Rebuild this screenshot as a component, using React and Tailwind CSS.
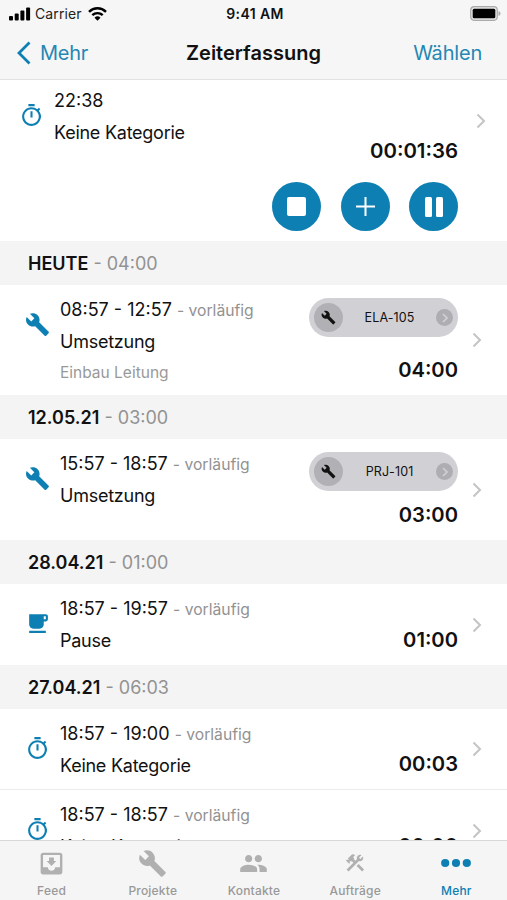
import React from "react";
import {
  MdBuild,
  MdOutlineTimer,
  MdFreeBreakfast,
  MdMoveToInbox,
  MdPeople,
  MdConstruction,
} from "react-icons/md";

const days = [
  {
    label: "HEUTE",
    total: "04:00",
    entries: [
      {
        time: "08:57 - 12:57",
        title: "Umsetzung",
        note: "Einbau Leitung",
        duration: "04:00",
        badge: "ELA-105",
        icon: "work",
        height: "h-[110px]",
      },
    ],
  },
  {
    label: "12.05.21",
    total: "03:00",
    entries: [
      {
        time: "15:57 - 18:57",
        title: "Umsetzung",
        duration: "03:00",
        badge: "PRJ-101",
        icon: "work",
        height: "h-[101px]",
      },
    ],
  },
  {
    label: "28.04.21",
    total: "01:00",
    entries: [
      {
        time: "18:57 - 19:57",
        title: "Pause",
        duration: "01:00",
        icon: "break",
        height: "h-[81px]",
      },
    ],
  },
  {
    label: "27.04.21",
    total: "06:03",
    entries: [
      {
        time: "18:57 - 19:00",
        title: "Keine Kategorie",
        duration: "00:03",
        icon: "timer",
        height: "h-[81px]",
      },
      {
        time: "18:57 - 18:57",
        title: "Keine Kategorie",
        duration: "00:00",
        icon: "timer",
        height: "h-[81px]",
      },
    ],
  },
];

const tabs = [
  { label: "Feed", icon: <MdMoveToInbox size={29} /> },
  { label: "Projekte", icon: <MdBuild size={29} /> },
  { label: "Kontakte", icon: <MdPeople size={29} /> },
  { label: "Aufträge", icon: <MdConstruction size={22} /> },
  { label: "Mehr", icon: <Dots />, active: true },
];

function Dots() {
  return (
    <svg width="30" height="10" viewBox="0 0 30 10" fill="currentColor">
      <circle cx="4.2" cy="5" r="4.1" />
      <circle cx="15" cy="5" r="4.1" />
      <circle cx="25.8" cy="5" r="4.1" />
    </svg>
  );
}

const Chevron = () => (
  <svg width="10" height="16" viewBox="0 0 10 16" fill="none" className="shrink-0">
    <path d="M1.5 1.5 8 8l-6.500 6.500" stroke="#c4c4c6" strokeWidth="2" />
  </svg>
);

const EntryIcon = ({ type }) => {
  if (type === "work") return <MdBuild size={25} />;
  if (type === "break") return <MdFreeBreakfast size={25} />;
  return <MdOutlineTimer size={25} />;
};

const StatusBar = () => (
  <div className="grid h-[27px] grid-cols-3 items-center pl-[9px] pr-[6px]">
    <div className="flex items-center">
      <svg width="22" height="14" viewBox="0 0 22 14" fill="#000">
        <rect x="0" y="9" width="4" height="4.500" rx="1" />
        <rect x="5.700" y="6.500" width="4" height="7" rx="1" />
        <rect x="11.400" y="3.500" width="4" height="10" rx="1" />
        <rect x="17.100" y="0.500" width="4" height="13" rx="1" />
      </svg>
      <span className="ml-1 text-[14px] tracking-[0.1px] text-[#222]">Carrier</span>
      <svg width="19" height="14" viewBox="0 0 19 14" className="ml-[6px]">
        <path d="M1 4.800a12.200 12.200 0 0 1 17 0" fill="none" stroke="#000" strokeWidth="2.500" />
        <path d="M4.300 8.200a7.500 7.500 0 0 1 10.400 0" fill="none" stroke="#000" strokeWidth="2.400" />
        <path d="M9.500 13.800 6.500 10.700a4.300 4.300 0 0 1 6 0Z" fill="#000" />
      </svg>
    </div>
    <span className="text-center text-[14px] font-semibold tracking-[0.4px]">
      9:41 AM
    </span>
    <svg width="31" height="15" viewBox="0 0 31 15" className="justify-self-end">
      <rect x="0.700" y="0.700" width="26.600" height="13.600" rx="3.500" fill="#e4e4e4" stroke="#aaa" strokeWidth="1.200" />
      <rect x="2.700" y="2.700" width="22.600" height="9.600" rx="1.500" fill="#000" />
      <path d="M28.500 5v5c1.400-.5 2-1.400 2-2.500s-.6-2-2-2.500Z" fill="#aaa" />
    </svg>
  </div>
);

const NavBar = () => (
  <header className="h-20 shrink-0 border-b border-[#e2e2e2] bg-[#f6f6f6]">
    <StatusBar />
    <div className="grid h-[51px] grid-cols-[1fr_auto_1fr] items-center px-4 text-[20px]">
      <button className="flex items-center text-[#2587b3]">
        <svg width="15" height="24" viewBox="0 0 15 24" fill="none">
          <path d="M13.500 1.500 3 12l10.500 10.500" stroke="#0d7fb2" strokeWidth="2.800" />
        </svg>
        <span className="ml-[9px] tracking-[-0.3px]">Mehr</span>
      </button>
      <h1 className="font-semibold">Zeiterfassung</h1>
      <button className="mr-[9px] justify-self-end tracking-[-0.2px] text-[#2587b3]">
        Wählen
      </button>
    </div>
  </header>
);

const RoundButton = ({ children }) => (
  <button className="flex size-[49px] items-center justify-center rounded-full bg-[#0d7fb2]">
    {children}
  </button>
);

const RunningTimer = () => (
  <section className="h-[161px] shrink-0">
    <div className="flex h-[88px] pl-[19px]">
      <div className="mt-[23px] text-[#0d7fb2]">
        <MdOutlineTimer size={25} />
      </div>
      <div className="ml-[10px] mt-[5px] text-[18px] leading-[31px]">
        <p className="h-[31.500px]">22:38</p>
        <p className="tracking-[-0.25px]">Keine Kategorie</p>
      </div>
      <p className="ml-auto mt-[55px] text-[20.400px] font-semibold leading-[31px]">00:01:36</p>
      <div className="ml-[18px] mr-[21px] mt-[33px]">
        <Chevron />
      </div>
    </div>
    <div className="mr-[49px] mt-[14px] flex justify-end gap-[19.500px]">
      <RoundButton>
        <div className="size-[19px] rounded-[2px] bg-white" />
      </RoundButton>
      <RoundButton>
        <svg width="19" height="19" viewBox="0 0 19 19">
          <path d="M9.500 0v19M0 9.500h19" stroke="#fff" strokeWidth="2" />
        </svg>
      </RoundButton>
      <RoundButton>
        <div className="flex gap-1">
          <div className="h-5 w-[7px] rounded-[1.500px] bg-white" />
          <div className="h-5 w-[7px] rounded-[1.500px] bg-white" />
        </div>
      </RoundButton>
    </div>
  </section>
);

const Badge = ({ text }) => (
  <div className="flex h-[39px] w-[149px] items-center rounded-full bg-[#d1d0d5] pl-[5px] pr-[5px]">
    <div className="flex size-[29px] items-center justify-center rounded-full bg-[#b1b0b5]">
      <MdBuild size={15} />
    </div>
    <span className="flex-1 pt-[2px] text-center text-[12.500px] tracking-[0.1px] text-[#111]">
      {text}
    </span>
    <div className="flex size-[17px] items-center justify-center rounded-full bg-[#aeadb2]">
      <svg width="6" height="10" viewBox="0 0 6 10" fill="none">
        <path d="m1 1 4 4-4 4" stroke="#d1d0d5" strokeWidth="1.600" />
      </svg>
    </div>
  </div>
);

const Entry = ({ entry }) => (
  <div className={`flex shrink-0 pl-[25px] ${entry.height}`}>
    <div className="mt-[27px] text-[#0d7fb2]">
      <EntryIcon type={entry.icon} />
    </div>
    <div className="ml-[10px] mt-[9px] text-[18px] leading-[31px]">
      <p className="h-[31.500px]">
        {entry.time}{" "}
        <span className="text-[15.700px] leading-none text-[#929292]">- vorläufig</span>
      </p>
      <p className="tracking-[-0.25px]">{entry.title}</p>
      {entry.note && <p className="text-[15.500px] leading-[31px] text-[#999]">{entry.note}</p>}
    </div>
    <div className="ml-auto flex flex-col items-end justify-between pb-[10px] pt-[13px]">
      {entry.badge ? <Badge text={entry.badge} /> : <span />}
      <p className="text-[20.200px] font-semibold leading-[31px]">{entry.duration}</p>
    </div>
    <div className="ml-[14px] mr-[25px] flex items-center">
      <Chevron />
    </div>
  </div>
);

const TabBar = () => (
  <nav className="grid h-[60px] shrink-0 grid-cols-5 border-t border-[#d8d8d8] bg-[#f5f5f5] pl-px">
    {tabs.map((tab) => (
      <div
        key={tab.label}
        className={`flex flex-col items-center ${tab.active ? "text-[#0d7fb2]" : "text-[#b0b0b0]"}`}
      >
        <div className="flex h-[44px] items-center">{tab.icon}</div>
        <span
          className={`-mt-[2px] text-[12px] font-medium leading-[16px] tracking-[0.2px] ${
            tab.active ? "text-[#0d7fb2]" : "text-[#999]"
          }`}
        >
          {tab.label}
        </span>
      </div>
    ))}
  </nav>
);

const App = () => {
  return (
    <div className="flex h-screen w-full flex-col overflow-hidden bg-white font-['Inter',sans-serif] text-[#111]">
      <NavBar />
      <main className="flex min-h-0 flex-1 flex-col overflow-hidden">
        <RunningTimer />
        {days.map((day) => (
          <section key={day.label} className="shrink-0">
            <h2 className="flex h-11 items-center whitespace-pre bg-[#f4f4f4] pl-7 text-[18px] font-semibold">
              {day.label}
              <span className="font-normal text-[#929292]"> - {day.total}</span>
            </h2>
            <div className="divide-y divide-[#ebebeb]">
              {day.entries.map((entry, i) => (
                <Entry key={i} entry={entry} />
              ))}
            </div>
          </section>
        ))}
      </main>
      <TabBar />
    </div>
  );
};

export default App;
